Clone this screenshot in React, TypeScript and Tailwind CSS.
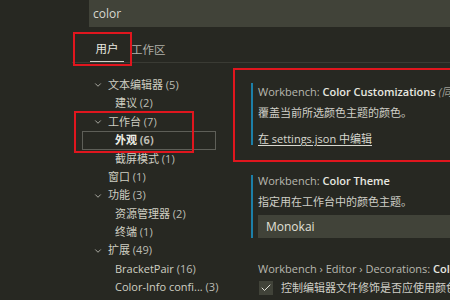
import { ChevronDown, Check } from 'lucide-react';

type Row = { label: string; count: string; level: 1 | 2; chevron?: boolean; selected?: boolean };

const rows: Row[] = [
  { label: '文本编辑器', count: '(5)', level: 1, chevron: true },
  { label: '建议', count: '(2)', level: 2 },
  { label: '工作台', count: '(7)', level: 1, chevron: true },
  { label: '外观', count: '(6)', level: 2, selected: true },
  { label: '截屏模式', count: '(1)', level: 2 },
  { label: '窗口', count: '(1)', level: 1 },
  { label: '功能', count: '(3)', level: 1, chevron: true },
  { label: '资源管理器', count: '(2)', level: 2 },
  { label: '终端', count: '(1)', level: 2 },
  { label: '扩展', count: '(49)', level: 1, chevron: true },
  { label: 'BracketPair', count: '(16)', level: 2 },
  { label: 'Color-Info confi...', count: '(3)', level: 2 },
];

export default function App() {
  return (
    <div
      className="relative w-[450px] h-[300px] overflow-hidden bg-[#272822] text-[#cfcfc2]"
      style={{ fontFamily: '"Open Sans", "Noto Sans CJK SC", sans-serif' }}
    >
      {/* Search box */}
      <div className="ml-[89px] h-[27px] bg-[#414339] flex items-center pl-[4px] text-[12px] text-[#d8d8d0]">
        color
      </div>

      {/* Tabs */}
      <div className="ml-[72px] h-[36px] flex items-end border-b border-[#3a3b34]">
        <div className="ml-[18px] w-[34px] h-[24px] flex flex-col items-center justify-end gap-[6px]">
          <span className="text-[11.5px] text-[#e8e8e0] leading-none">用户</span>
          <div className="w-full h-[1.5px] bg-[#d0d0c8]" />
        </div>
        <span className="ml-[7px] mb-[7px] text-[11.5px] text-[#b0b0a8] leading-none">工作区</span>
      </div>

      <div className="flex">
        {/* Tree */}
        <div className="w-[233px] shrink-0 pt-[13px] text-[11px]">
          {rows.map((r, i) => (
            <div key={i} className="h-[18.4px] flex items-center relative">
              {r.selected && (
                <div className="absolute left-[82px] w-[134px] top-0 bottom-0 border border-[#5e5f58]" />
              )}
              {r.chevron && (
                <ChevronDown className="absolute left-[93px] w-[10px] h-[10px] text-[#c0c0b8]" strokeWidth={2} />
              )}
              <span
                className={`${r.level === 1 ? 'ml-[108px]' : 'ml-[115px]'} whitespace-nowrap ${
                  r.selected ? 'font-bold text-[#f0f0e8]' : ''
                }`}
              >
                {r.label} <span className="text-[#bdbdb5]">{r.count}</span>
              </span>
            </div>
          ))}
        </div>

        {/* Settings */}
        <div className="min-w-0 flex-1 text-[11px] whitespace-nowrap overflow-hidden">
          <div className="pl-[18px] pt-[20px]">
            <div className="border-l-2 border-[#1c7fa8] pl-[5px] h-[62px]">
              <div className="leading-none pt-[3px]">
                <span className="text-[#b8b8b0]">Workbench: </span>
                <span className="font-semibold text-[#e8e8e0]">Color Customizations</span>
                <span className="italic text-[#a0a098]"> (同步</span>
              </div>
              <div className="mt-[10px] leading-none text-[#cfcfc7]">覆盖当前所选颜色主题的颜色。</div>
              <div className="mt-[15px] leading-none text-[#d8d8d0] underline underline-offset-2">在 settings.json 中编辑</div>
            </div>
          </div>

          <div className="pl-[18px] pt-[30px]">
            <div className="border-l-2 border-[#1c7fa8] pl-[5px] h-[63px]">
              <div className="leading-none">
                <span className="text-[#b8b8b0]">Workbench: </span>
                <span className="font-semibold text-[#e8e8e0]">Color Theme</span>
              </div>
              <div className="mt-[10px] leading-none text-[#cfcfc7]">指定用在工作台中的颜色主题。</div>
              <div className="mt-[8px] h-[23px] bg-[#414339] flex items-center pl-[8px] text-[12px] text-[#e0e0d8]">
                Monokai
              </div>
            </div>
          </div>

          <div className="pl-[25px] pt-[25px]">
            <div className="leading-none">
              <span className="text-[#b8b8b0]">Workbench › Editor › Decorations: </span>
              <span className="font-semibold text-[#e8e8e0]">Colors</span>
            </div>
            <div className="mt-[6px] flex items-center">
              <div className="ml-[1px] w-[14px] h-[14px] shrink-0 bg-[#414339] flex items-center justify-center">
                <Check className="w-[12px] h-[12px] text-[#e0e0d8]" strokeWidth={2} />
              </div>
              <span className="ml-[8px] text-[#cfcfc7]">控制编辑器文件修饰是否应使用颜色。</span>
            </div>
          </div>
        </div>
      </div>

      {/* Red annotation boxes */}
      <div className="absolute left-[73px] top-[32px] w-[59px] h-[34px] border-2 border-[#e0161e]" />
      <div className="absolute left-[74px] top-[111px] w-[120px] h-[42px] border-2 border-[#e0161e]" />
      <div className="absolute left-[233px] top-[68px] w-[230px] h-[94px] border-2 border-[#e0161e]" />
    </div>
  );
}
